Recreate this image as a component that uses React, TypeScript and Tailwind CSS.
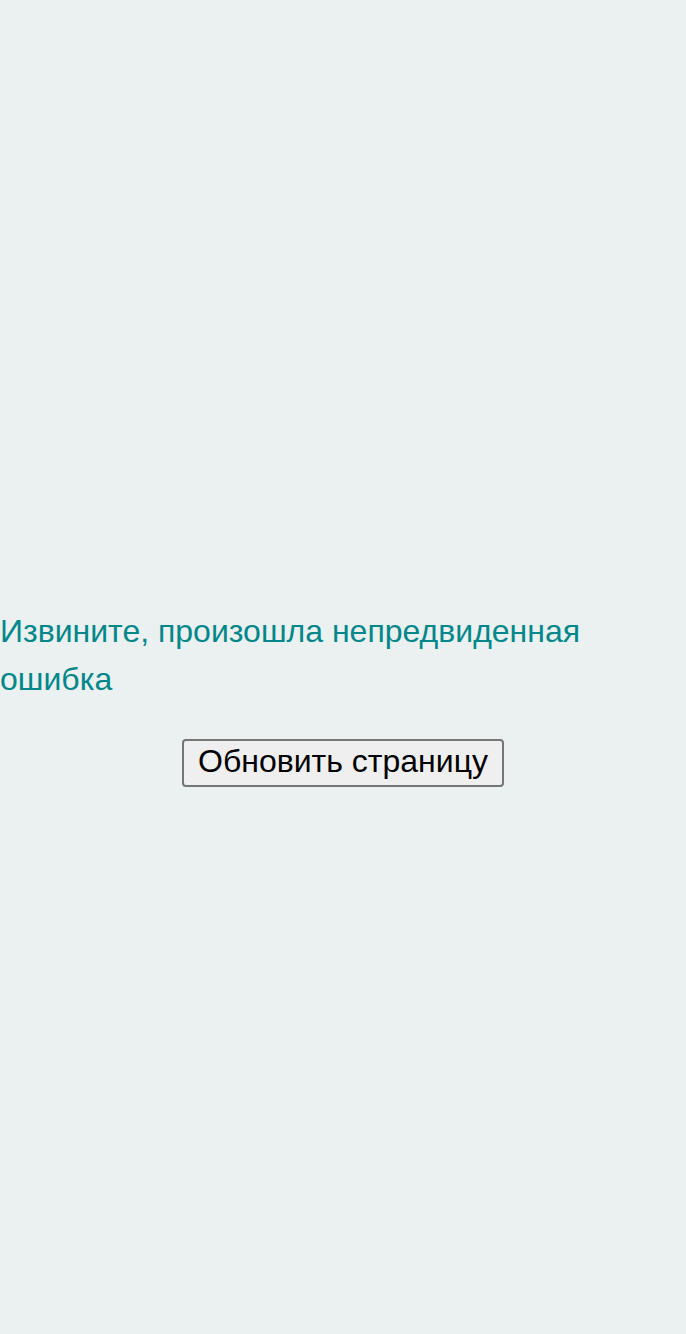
export default function App() {
  return (
    <div className="min-h-screen w-full bg-[#ebf0f0] flex flex-col justify-center pt-[60px] font-['Liberation_Sans',Arial,sans-serif]">
      {/* Error message */}
      <p className="text-[32px] leading-[48px] text-[#00878a] m-0">
        Извините, произошла непредвиденная ошибка
      </p>

      {/* Reload */}
      <div className="mt-[36px] flex justify-center">
        <button
          type="button"
          onClick={() => window.location.reload()}
          className="h-[48px] px-[14px] pb-[4px] text-[32px] leading-[36px] text-black bg-[#efefef] border-2 border-[#767676] rounded-[4px]"
        >
          Обновить страницу
        </button>
      </div>
    </div>
  );
}
